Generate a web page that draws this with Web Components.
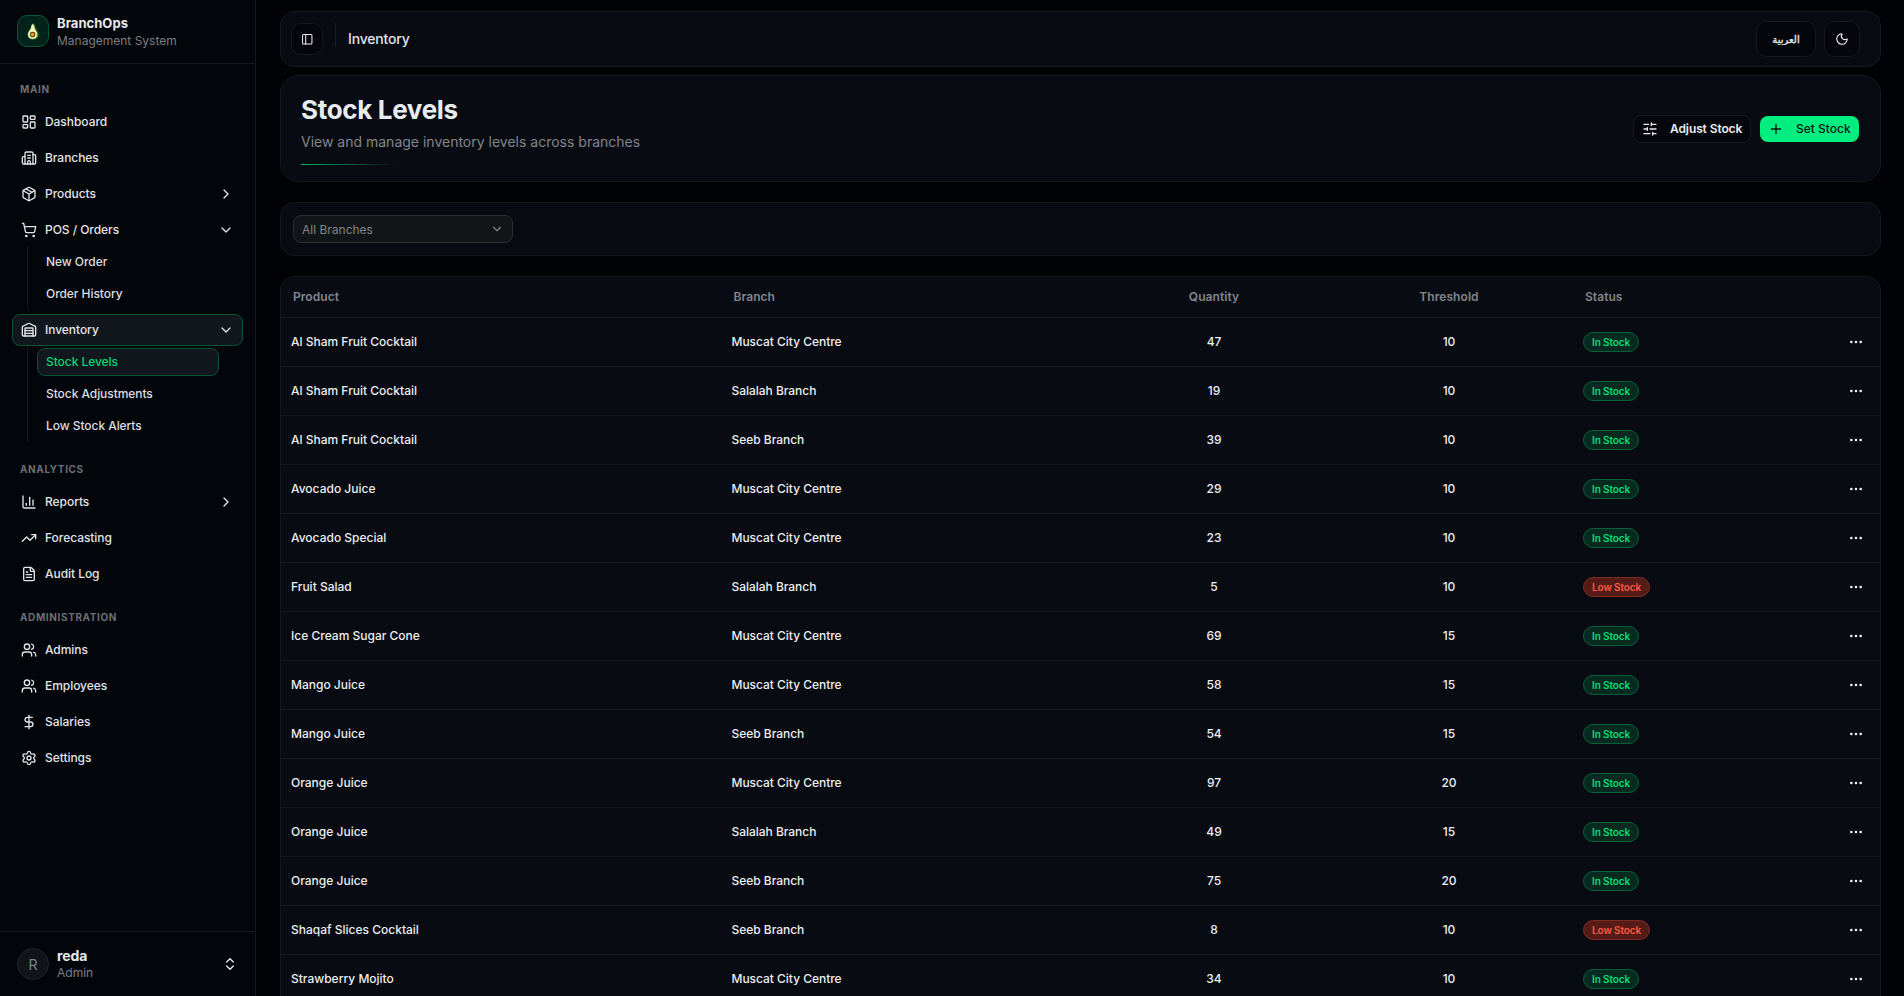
<!DOCTYPE html>
<html lang="en">
<head>
<meta charset="utf-8">
<title>BranchOps – Inventory</title>
<style>
html,body{margin:0;height:100%;background:#010206;overflow:hidden}
body{font-family:Inter,"Noto Sans",sans-serif;font-size:12px;color:#e9ebee}
:root{--panel:#080b12;--line:#14181e;--muted:#82858c}
</style>
</head>
<body>
<app-shell>
  <side-bar slot="sidebar">
    <nav-group label="Main">
      <nav-item icon="dashboard">Dashboard</nav-item>
      <nav-item icon="building">Branches</nav-item>
      <nav-item icon="package" chevron="right">Products</nav-item>
      <nav-item icon="cart" chevron="down">POS / Orders
        <sub-item slot="sub">New Order</sub-item>
        <sub-item slot="sub">Order History</sub-item>
      </nav-item>
      <nav-item icon="warehouse" chevron="down" active>Inventory
        <sub-item slot="sub" active>Stock Levels</sub-item>
        <sub-item slot="sub">Stock Adjustments</sub-item>
        <sub-item slot="sub">Low Stock Alerts</sub-item>
      </nav-item>
    </nav-group>
    <nav-group label="Analytics">
      <nav-item icon="chart" chevron="right">Reports</nav-item>
      <nav-item icon="trend">Forecasting</nav-item>
      <nav-item icon="file">Audit Log</nav-item>
    </nav-group>
    <nav-group label="Administration">
      <nav-item icon="users">Admins</nav-item>
      <nav-item icon="users">Employees</nav-item>
      <nav-item icon="dollar">Salaries</nav-item>
      <nav-item icon="settings">Settings</nav-item>
    </nav-group>
  </side-bar>
  <top-bar>Inventory</top-bar>
  <page-head>
    <span slot="title">Stock Levels</span>
    <span slot="sub">View and manage inventory levels across branches</span>
  </page-head>
  <filter-bar>All Branches</filter-bar>
  <stock-table></stock-table>
</app-shell>
<script>
const ICONS = {
  dashboard:'<rect width="7" height="9" x="3" y="3" rx="1"/><rect width="7" height="5" x="14" y="3" rx="1"/><rect width="7" height="9" x="14" y="12" rx="1"/><rect width="7" height="5" x="3" y="16" rx="1"/>',
  building:'<path d="M10 12h4M10 8h4M14 21v-3a2 2 0 0 0-4 0v3"/><path d="M6 10H4a2 2 0 0 0-2 2v7a2 2 0 0 0 2 2h16a2 2 0 0 0 2-2V9a2 2 0 0 0-2-2h-2"/><path d="M6 21V5a2 2 0 0 1 2-2h8a2 2 0 0 1 2 2v16"/>',
  package:'<path d="M11 21.73a2 2 0 0 0 2 0l7-4A2 2 0 0 0 21 16V8a2 2 0 0 0-1-1.73l-7-4a2 2 0 0 0-2 0l-7 4A2 2 0 0 0 3 8v8a2 2 0 0 0 1 1.73z"/><path d="M12 22V12"/><path d="m3.3 7 8.7 5 8.7-5"/><path d="m7.5 4.27 9 5.15"/>',
  cart:'<circle cx="8" cy="21" r="1"/><circle cx="19" cy="21" r="1"/><path d="M2.05 2.05h2l2.66 12.42a2 2 0 0 0 2 1.58h9.78a2 2 0 0 0 1.95-1.57l1.65-7.43H5.12"/>',
  warehouse:'<path d="M18 21V10a1 1 0 0 0-1-1H7a1 1 0 0 0-1 1v11"/><path d="M22 19a2 2 0 0 1-2 2H4a2 2 0 0 1-2-2V8a2 2 0 0 1 1.132-1.803l7.95-3.974a2 2 0 0 1 1.837 0l7.948 3.974A2 2 0 0 1 22 8z"/><path d="M6 13h12M6 17h12"/>',
  chart:'<path d="M3 3v16a2 2 0 0 0 2 2h16"/><path d="M18 17V9"/><path d="M13 17V5"/><path d="M8 17v-3"/>',
  trend:'<path d="M22 7 13.5 15.5 8.5 10.5 2 17"/><path d="M16 7h6v6"/>',
  file:'<path d="M6 22a2 2 0 0 1-2-2V4a2 2 0 0 1 2-2h8a2.4 2.4 0 0 1 1.704.706l3.588 3.588A2.4 2.4 0 0 1 20 8v12a2 2 0 0 1-2 2z"/><path d="M14 2v5a1 1 0 0 0 1 1h5"/><path d="M10 9H8M16 13H8M16 17H8"/>',
  users:'<path d="M16 21v-2a4 4 0 0 0-4-4H6a4 4 0 0 0-4 4v2"/><path d="M16 3.128a4 4 0 0 1 0 7.744"/><path d="M22 21v-2a4 4 0 0 0-3-3.87"/><circle cx="9" cy="7" r="4"/>',
  dollar:'<path d="M12 2v20"/><path d="M17 5H9.5a3.5 3.5 0 0 0 0 7h5a3.5 3.5 0 0 1 0 7H6"/>',
  settings:'<path d="M9.671 4.136a2.34 2.34 0 0 1 4.659 0 2.34 2.34 0 0 0 3.319 1.915 2.34 2.34 0 0 1 2.33 4.033 2.34 2.34 0 0 0 0 3.831 2.34 2.34 0 0 1-2.33 4.033 2.34 2.34 0 0 0-3.319 1.915 2.34 2.34 0 0 1-4.659 0 2.34 2.34 0 0 0-3.32-1.915 2.34 2.34 0 0 1-2.33-4.033 2.34 2.34 0 0 0 0-3.831A2.34 2.34 0 0 1 6.35 6.051a2.34 2.34 0 0 0 3.319-1.915"/><circle cx="12" cy="12" r="3"/>',
  right:'<path d="m9 18 6-6-6-6"/>',
  down:'<path d="m6 9 6 6 6-6"/>',
  updown:'<path d="m7 15 5 5 5-5"/><path d="m7 9 5-5 5 5"/>',
  panel:'<rect width="18" height="18" x="3" y="3" rx="2"/><path d="M9 3v18"/>',
  moon:'<path d="M20.985 12.486a9 9 0 1 1-9.473-9.472c.405-.022.617.46.402.803a6 6 0 0 0 8.268 8.268c.344-.215.825-.004.803.401"/>',
  sliders:'<path d="M10 5H3M12 19H3M14 3v4M16 17v4M21 12h-9M21 19h-5M21 5h-7M8 10v4M8 12H3"/>',
  plus:'<path d="M5 12h14M12 5v14"/>',
  dots:'<g fill="currentColor"><circle cx="12" cy="12" r="1"/><circle cx="19" cy="12" r="1"/><circle cx="5" cy="12" r="1"/></g>'
};
function define(name, render){
  customElements.define(name, class extends HTMLElement{
    constructor(){super();this.attachShadow({mode:'open'});}
    connectedCallback(){this.shadowRoot.innerHTML = '<style>*{box-sizing:border-box}:host{box-sizing:border-box}</style>'+render(this);}
  });
}
define('ui-icon', el => `<style>:host{display:block;flex:none;width:var(--s,16px);height:var(--s,16px)}svg{display:block;width:100%;height:100%}</style>
<svg viewBox="0 0 24 24" fill="none" stroke="currentColor" stroke-width="2" stroke-linecap="round" stroke-linejoin="round">${ICONS[el.getAttribute('name')]}</svg>`);

define('app-shell', () => `<style>
:host{display:grid;grid-template-columns:256px 1fr;height:996px;overflow:hidden}
main{display:flex;flex-direction:column;padding:11px 23px 0 24px;min-width:0;height:996px;overflow:hidden}
</style><slot name="sidebar"></slot><main><slot></slot></main>`);

define('avocado-logo', () => `<style>:host{display:flex;align-items:center;justify-content:center;width:32px;height:32px;flex:none;border:1px solid #055a38;border-radius:10px;background:#03231a}</style>
<svg width="12" height="17" viewBox="0 0 12 17"><path d="M6.200.6C7.900.8 8 3 8.700 5.200c.6 2 2.900 3.400 2.900 6.500 0 3-2.400 4.900-5.600 4.900S.5 14.600.5 11.600C.5 8.500 2.800 7.400 3.600 5 4.100 3.200 4.400.5 6.200.6z" fill="#3f7a2c"/><path d="M5.600 1.200c1.300 0 1.500 2 2.100 4.200.6 2.200 2.500 3.400 2.500 6.200 0 2.600-2 4.400-4.500 4.400S1 14.200 1 11.600c0-2.800 2.100-4 2.900-6.300.5-1.700.5-4.100 1.700-4.100z" fill="#f0f7b8"/><circle cx="5.600" cy="11.500" r="2.700" fill="#4a3212"/><circle cx="5.500" cy="11.500" r="1.800" fill="#f5a020"/></svg>`);

define('side-bar', () => `<style>
:host{display:flex;flex-direction:column;height:996px;background:#02050a;border-right:1px solid #13161b}
header,footer{display:flex;align-items:center;gap:8px;padding:0 17px;flex:none}
header{height:64px;border-bottom:1px solid #13161b;padding-bottom:1px}
footer{height:65px;border-top:1px solid #13161b}
nav{flex:1;padding:10px 12px 0;display:flex;flex-direction:column;gap:12px}
.t{display:flex;flex-direction:column}
header .t{padding-top:2px}
b{font-weight:700;font-size:13px;line-height:17px;color:#e6e9eb}
small{font-size:12px;line-height:17px;color:#7b7e87}
.av{width:32px;height:32px;border-radius:50%;border:1px solid #22262c;background:#11151b;display:flex;align-items:center;justify-content:center;color:#7d8087;font-size:14px}
ui-icon{margin-left:auto}
</style>
<header><avocado-logo></avocado-logo><div class="t"><b style="letter-spacing:.04px">BranchOps</b><small>Management System</small></div></header>
<nav><slot></slot></nav>
<footer><div class="av">R</div><div class="t"><b style="font-size:14px;letter-spacing:-.1px">reda</b><small>Admin</small></div><ui-icon name="updown"></ui-icon></footer>`);

define('nav-group', el => `<style>:host{display:flex;flex-direction:column}
h6{margin:0;height:32px;line-height:31px;padding-left:8px;font-size:10px;font-weight:700;letter-spacing:.62px;text-transform:uppercase;color:#6c6f74}
div{display:flex;flex-direction:column;gap:4px}</style><h6>${el.getAttribute('label')}</h6><div><slot></slot></div>`);

define('nav-item', el => `<style>:host{display:block;color:#e2e4e7}
.r{display:flex;align-items:center;height:32px;padding:0 8px;gap:8px;border:1px solid transparent;border-radius:8px;font-weight:500;font-size:12px;letter-spacing:-.05px}
.r span{padding-bottom:1px}
:host([active]) .r{background:#12161d;border-color:#085236}
.c{margin-left:auto}
.sub{margin-left:15px;border-left:1px solid #13161b;padding:2px 24px 2px 9px;display:flex;flex-direction:column;gap:4px}
</style><div class="r"><ui-icon name="${el.getAttribute('icon')}"></ui-icon><span><slot></slot></span>${el.hasAttribute('chevron')?`<ui-icon class="c" name="${el.getAttribute('chevron')}"></ui-icon>`:''}</div>
${el.querySelector('sub-item')?'<div class="sub"><slot name="sub"></slot></div>':''}`);

define('sub-item', () => `<style>:host{display:flex;align-items:center;height:28px;padding:0 8px 1px;border:1px solid transparent;border-radius:8px;font-weight:500;font-size:12px;letter-spacing:-.06px;color:#dcdee1}
:host([active]){background:#12161d;border-color:#085236;color:#00d673}</style><slot></slot>`);

define('top-bar', () => `<style>
:host{display:flex;align-items:center;flex:none;height:56px;background:var(--panel);border:1px solid var(--line);border-radius:14px;padding:0 20px 0 10px}
.b{display:flex;align-items:center;justify-content:center;border:1px solid #15191f;background:#04060b;border-radius:10px;height:36px;--s:14px}
.tog{width:32px;height:32px;--s:12.500px}
.sep{width:1px;height:24px;background:#1b1f25;margin:-8px 12px 0}
h1{margin:-1px 0 0;font-size:14px;font-weight:500;letter-spacing:-.18px;color:#e2e5e8}
.ar{margin-left:auto;width:60px;margin-right:8px;font:400 10px "DejaVu Sans",sans-serif;-webkit-text-stroke:.35px currentColor}
</style><div class="b tog"><ui-icon name="panel"></ui-icon></div><div class="sep"></div><h1><slot></slot></h1>
<div class="b ar" lang="ar" dir="rtl">العربية</div><div class="b" style="width:36px"><ui-icon name="moon"></ui-icon></div>`);

define('page-head', () => `<style>
:host{display:flex;align-items:center;flex:none;height:107px;margin-top:8px;background:var(--panel);border:1px solid var(--line);border-radius:18px;padding:0 21px 0 20px}
h2{margin:0;font-size:26px;line-height:32px;font-weight:700;letter-spacing:-.33px;color:#e8ecef}
p{margin:6px 0 0;font-size:14px;line-height:20px;color:var(--muted)}
hr{border:0;margin:12px 0 0;width:96px;height:1px;background:linear-gradient(90deg,#00b564,transparent)}
.l{display:flex;flex-direction:column;margin-top:2px}
.a{margin-left:auto;display:flex;align-items:center;gap:9px}
.btn{display:flex;align-items:center;height:28px;border-radius:8px;font-size:12px;font-weight:600;letter-spacing:-.1px;gap:12px;white-space:nowrap}
.adj{width:118px;border:1px solid #171a20;background:#05070c;padding-left:8px}
.set{width:99px;height:26px;background:#00ee80;color:#04190f;padding-left:8px;font-weight:500;letter-spacing:0}
</style><div class="l"><h2><slot name="title"></slot></h2><p><slot name="sub"></slot></p><hr></div>
<div class="a"><div class="btn adj"><ui-icon name="sliders"></ui-icon><span>Adjust Stock</span></div><div class="btn set"><ui-icon name="plus"></ui-icon><span>Set Stock</span></div></div>`);

define('filter-bar', () => `<style>
:host{display:flex;align-items:center;flex:none;height:54px;margin-top:20px;background:var(--panel);border:1px solid var(--line);border-radius:14px;padding:0 12px}
.s{display:flex;align-items:center;justify-content:space-between;width:220px;height:28px;border:1px solid #2a2d31;border-radius:8px;background:#121518;color:#80848b;padding:0 7px 0 8px;font-size:12px}
span{padding-top:1px}
ui-icon{--s:14px;margin-right:1px}
</style><div class="s"><span><slot></slot></span><ui-icon name="down"></ui-icon></div>`);

define('status-badge', () => `<style>
:host{display:inline-flex;vertical-align:middle;align-items:center;height:20px;padding:0 8px 1px;border:1px solid #06603b;border-radius:10px;background:#062a20;color:#00de75;font-size:10px;font-weight:600;letter-spacing:-.1px;white-space:nowrap}
:host([low]){border-color:#7c2a22;background:#541b17;color:#ff5a43}
</style><slot></slot>`);

const M='Muscat City Centre', S='Salalah Branch', B='Seeb Branch', A='Al Sham Fruit Cocktail';
const ROWS=[[A,M,47,10],[A,S,19,10],[A,B,39,10],['Avocado Juice',M,29,10],['Avocado Special',M,23,10],['Fruit Salad',S,5,10],['Ice Cream Sugar Cone',M,69,15],['Mango Juice',M,58,15],['Mango Juice',B,54,15],['Orange Juice',M,97,20],['Orange Juice',S,49,15],['Orange Juice',B,75,20],['Shaqaf Slices Cocktail',B,8,10],['Strawberry Mojito',M,34,10]];
define('stock-table', () => `<style>
:host{display:block;flex:none;height:760px;margin-top:20px;background:var(--panel);border:1px solid var(--line);border-radius:14px}
.r{display:grid;grid-template-columns:440.5px 381.5px 222px 248px 1fr 48px;align-items:center;height:49px;border-bottom:1px solid var(--line);font-size:12px;font-weight:450;letter-spacing:-.03px;color:#eceef0}
.r>*{padding:0 0 1px 10px}
.r>.n{padding-left:0;text-align:center}
.r>:first-child{font-weight:500;letter-spacing:0}
.r>.st{padding-bottom:0}
.r.h{height:41px;color:var(--muted)}
.r.h>*{font-weight:600;letter-spacing:.06px;padding:0 0 1px 12px}
.r.h>.n{padding-left:0}
.r>ui-icon{padding:0;margin-left:16px}
</style><div class="r h"><span>Product</span><span>Branch</span><span class="n">Quantity</span><span class="n">Threshold</span><span>Status</span></div>
${ROWS.map(([p,b,q,t])=>`<div class="r"><span>${p}</span><span>${b}</span><span class="n">${q}</span><span class="n">${t}</span><span class="st">${q<t?'<status-badge low>Low Stock</status-badge>':'<status-badge>In Stock</status-badge>'}</span><ui-icon name="dots"></ui-icon></div>`).join('')}`);
</script>
</body>
</html>
